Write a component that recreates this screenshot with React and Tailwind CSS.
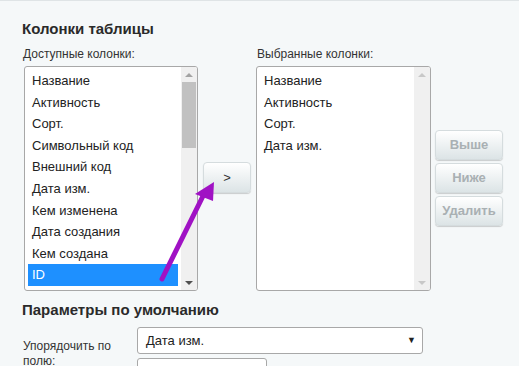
import React from 'react';

const available = [
  'Название',
  'Активность',
  'Сорт.',
  'Символьный код',
  'Внешний код',
  'Дата изм.',
  'Кем изменена',
  'Дата создания',
  'Кем создана',
  'ID',
];

const selected = ['Название', 'Активность', 'Сорт.', 'Дата изм.'];

const Scrollbar = ({ active }) => (
  <div className="w-[16px] bg-[#f0f0f0] flex flex-col items-center">
    <div className="h-[15px] flex items-center justify-center">
      <span className={`block w-0 h-0 border-l-[4px] border-r-[4px] border-b-[4px] border-l-transparent border-r-transparent ${active ? 'border-b-[#a3a3a3]' : 'border-b-[#c8c8c8]'}`} />
    </div>
    {active ? <div className="w-[14px] h-[66px] bg-[#c1c1c1]" /> : null}
    <div className="flex-1" />
    <div className="h-[15px] flex items-center justify-center">
      <span className={`block w-0 h-0 border-l-[4px] border-r-[4px] border-t-[4px] border-l-transparent border-r-transparent ${active ? 'border-t-[#505050]' : 'border-t-[#c8c8c8]'}`} />
    </div>
  </div>
);

const ListBox = ({ items, active, current, width }) => (
  <div className={`${width} h-[225px] bg-white border border-[#a8a8a8] rounded-[3px] flex overflow-hidden`}>
    <div className="flex-1 p-[3px]">
      {items.map((item) => (
        <div
          key={item}
          className={`h-[21.6px] leading-[21.6px] px-[4px] text-[13px] ${item === current ? 'bg-[#1e90ff] text-white' : 'text-[#222]'}`}
        >
          {item}
        </div>
      ))}
    </div>
    <Scrollbar active={active} />
  </div>
);

const Btn = ({ children, disabled, className = '' }) => (
  <button
    className={`h-[30px] rounded-[4px] border border-[#d5dcde] bg-gradient-to-b from-[#ffffff] to-[#dce4e6] shadow-[0_1px_1px_rgba(0,0,0,0.18)] text-[13px] ${disabled ? 'font-bold text-[#a9b0b3]' : 'text-[#333]'} ${className}`}
  >
    {children}
  </button>
);

export default function App() {
  return (
    <div
      className="relative w-[519px] h-[366px] overflow-hidden bg-[#f5f8f9] border-t border-[#dfe4e6] text-[#333]"
      style={{ fontFamily: '"Liberation Sans", Arial, sans-serif' }}
    >
      <div className="pl-[22px] pt-[13px]">
        <h2 className="text-[15px] font-bold leading-[30px] text-[#2a2a2a]">Колонки таблицы</h2>

        <div className="flex items-start mt-[-2px]">
          <div className="flex flex-col pl-[2px]">
            <div className="text-[12px] leading-[24px] text-[#333] ml-[-1px]">Доступные колонки:</div>
            <ListBox items={available} active current="ID" width="w-[174px]" />
          </div>

          <div className="ml-[5px] pt-[120px]">
            <Btn className="w-[48px] h-[31px]">&gt;</Btn>
          </div>

          <div className="flex flex-col ml-[5px]">
            <div className="text-[12px] leading-[24px] text-[#333] ml-[1px]">Выбранные колонки:</div>
            <ListBox items={selected} width="w-[175px]" />
          </div>

          <div className="flex flex-col gap-[3px] ml-[4px] pt-[88px]">
            <Btn disabled className="w-[68px]">Выше</Btn>
            <Btn disabled className="w-[68px]">Ниже</Btn>
            <Btn disabled className="w-[68px]">Удалить</Btn>
          </div>
        </div>

        <h2 className="text-[15px] font-bold leading-[22px] mt-[8px] text-[#2a2a2a]">Параметры по умолчанию</h2>

        <div className="flex mt-[6px]">
          <div className="w-[115px] pl-[1px] pt-[12px] text-[12px] leading-[15px] text-[#333]">
            <div className="w-[95px]">Упорядочить по полю:</div>
          </div>
          <div className="flex flex-col gap-[4px]">
            <div className="w-[286px] h-[27px] bg-white border border-[#a8a8a8] rounded-[3px] flex items-center justify-between pl-[8px] pr-[6px] text-[13px] text-[#222]">
              <span>Дата изм.</span>
              <span className="text-[9px] text-[#222]">▼</span>
            </div>
            <div className="w-[130px] h-[27px] bg-white border border-[#a8a8a8] rounded-[3px] flex items-center justify-between pl-[8px] pr-[6px] text-[13px] text-[#222]">
              <span>По убыванию</span>
              <span className="text-[9px] text-[#222]">▼</span>
            </div>
          </div>
        </div>
      </div>

      <svg className="absolute left-0 top-0 pointer-events-none" width="519" height="366">
        <line x1="162" y1="278" x2="204" y2="193" stroke="#a012c4" strokeWidth="5" strokeLinecap="round" />
        <polygon points="214,181 195,193 213,200" fill="#a012c4" />
      </svg>
    </div>
  );
}
